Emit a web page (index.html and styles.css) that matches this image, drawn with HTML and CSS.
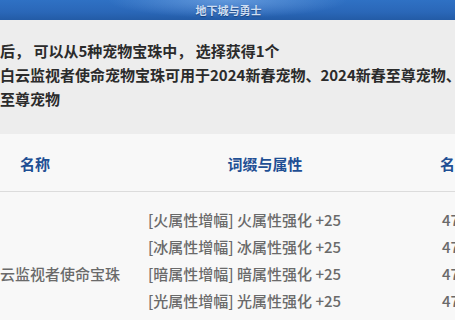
FILE: index.html
```html
<!DOCTYPE html>
<html lang="zh">
<head>
<meta charset="utf-8">
<link rel="stylesheet" href="styles.css">
</head>
<body>
<header class="topbar"><span class="brand">地下城与勇士</span></header>
<section class="intro">
  <p class="line">后， 可以从5种宠物宝珠中， 选择获得1个</p>
  <p class="line">白云监视者使命宠物宝珠可用于2024新春宠物、2024新春至尊宠物、</p>
  <p class="line">至尊宠物</p>
</section>
<section class="table">
  <div class="thead">
    <div class="th th-name">名称</div>
    <div class="th th-affix">词缀与属性</div>
    <div class="th th-extra">名</div>
  </div>
  <div class="tbody">
    <div class="td td-name">云监视者使命宝珠</div>
    <div class="td td-affix">[火属性增幅] 火属性强化 +25</div>
    <div class="td td-extra">47</div>
    <div class="td td-affix">[冰属性增幅] 冰属性强化 +25</div>
    <div class="td td-extra">47</div>
    <div class="td td-affix">[暗属性增幅] 暗属性强化 +25</div>
    <div class="td td-extra">47</div>
    <div class="td td-affix">[光属性增幅] 光属性强化 +25</div>
    <div class="td td-extra">47</div>
    <div class="td td-affix">[全属性增幅] 全属性强化 +15</div>
    <div class="td td-extra">47</div>
  </div>
</section>
</body>
</html>
```
FILE: styles.css
```css
* { box-sizing: border-box; }
html, body {
  margin: 0;
  padding: 0;
  width: 455px;
  height: 320px;
  overflow: hidden;
  background: #f8f8f8;
  font-family: "Noto Sans CJK SC", "Noto Sans", sans-serif;
}
.topbar {
  height: 20px;
  display: flex;
  align-items: center;
  justify-content: center;
  background:
    radial-gradient(ellipse 120px 18px at 50% 0%, rgba(140, 185, 240, 0.55), rgba(140, 185, 240, 0) 100%),
    linear-gradient(180deg, #2f71c4 0%, #2a67b8 60%, #235ba6 100%);
}
.brand {
  font-size: 11px;
  font-weight: 700;
  color: #cfdff3;
  letter-spacing: 0;
  padding-left: 2px;
  text-shadow: 0 1px 1px rgba(10, 40, 90, 0.6);
  line-height: 1;
}
.intro {
  background: #ededed;
  padding: 19px 0 23px 0;
  white-space: nowrap;
  overflow: hidden;
}
.line {
  margin: 0;
  font-size: 15px;
  line-height: 24px;
  font-weight: 700;
  color: #2b2b2b;
}
.table {
  background: #f8f8f8;
}
.thead {
  display: grid;
  grid-template-columns: 148px 234px 1fr;
  height: 58px;
  align-items: center;
  border-bottom: 1px solid #dcdcdc;
  padding-top: 1px;
}
.th {
  font-size: 15px;
  font-weight: 700;
  color: #1f4f94;
  white-space: nowrap;
}
.th-name { padding-left: 20px; }
.th-affix { text-align: center; }
.th-extra { padding-left: 58px; }
.tbody {
  display: grid;
  grid-template-columns: 148px 234px 1fr;
  grid-auto-rows: 27px;
  padding-top: 14px;
  white-space: nowrap;
}
.td {
  font-size: 15px;
  line-height: 27px;
  color: #6a6a6a;
  font-weight: 500;
}
.td-name {
  grid-row: 1 / span 5;
  grid-column: 1;
  align-self: center;
}
.td-affix { grid-column: 2; }
.td-extra { grid-column: 3; padding-left: 60px; }
```
